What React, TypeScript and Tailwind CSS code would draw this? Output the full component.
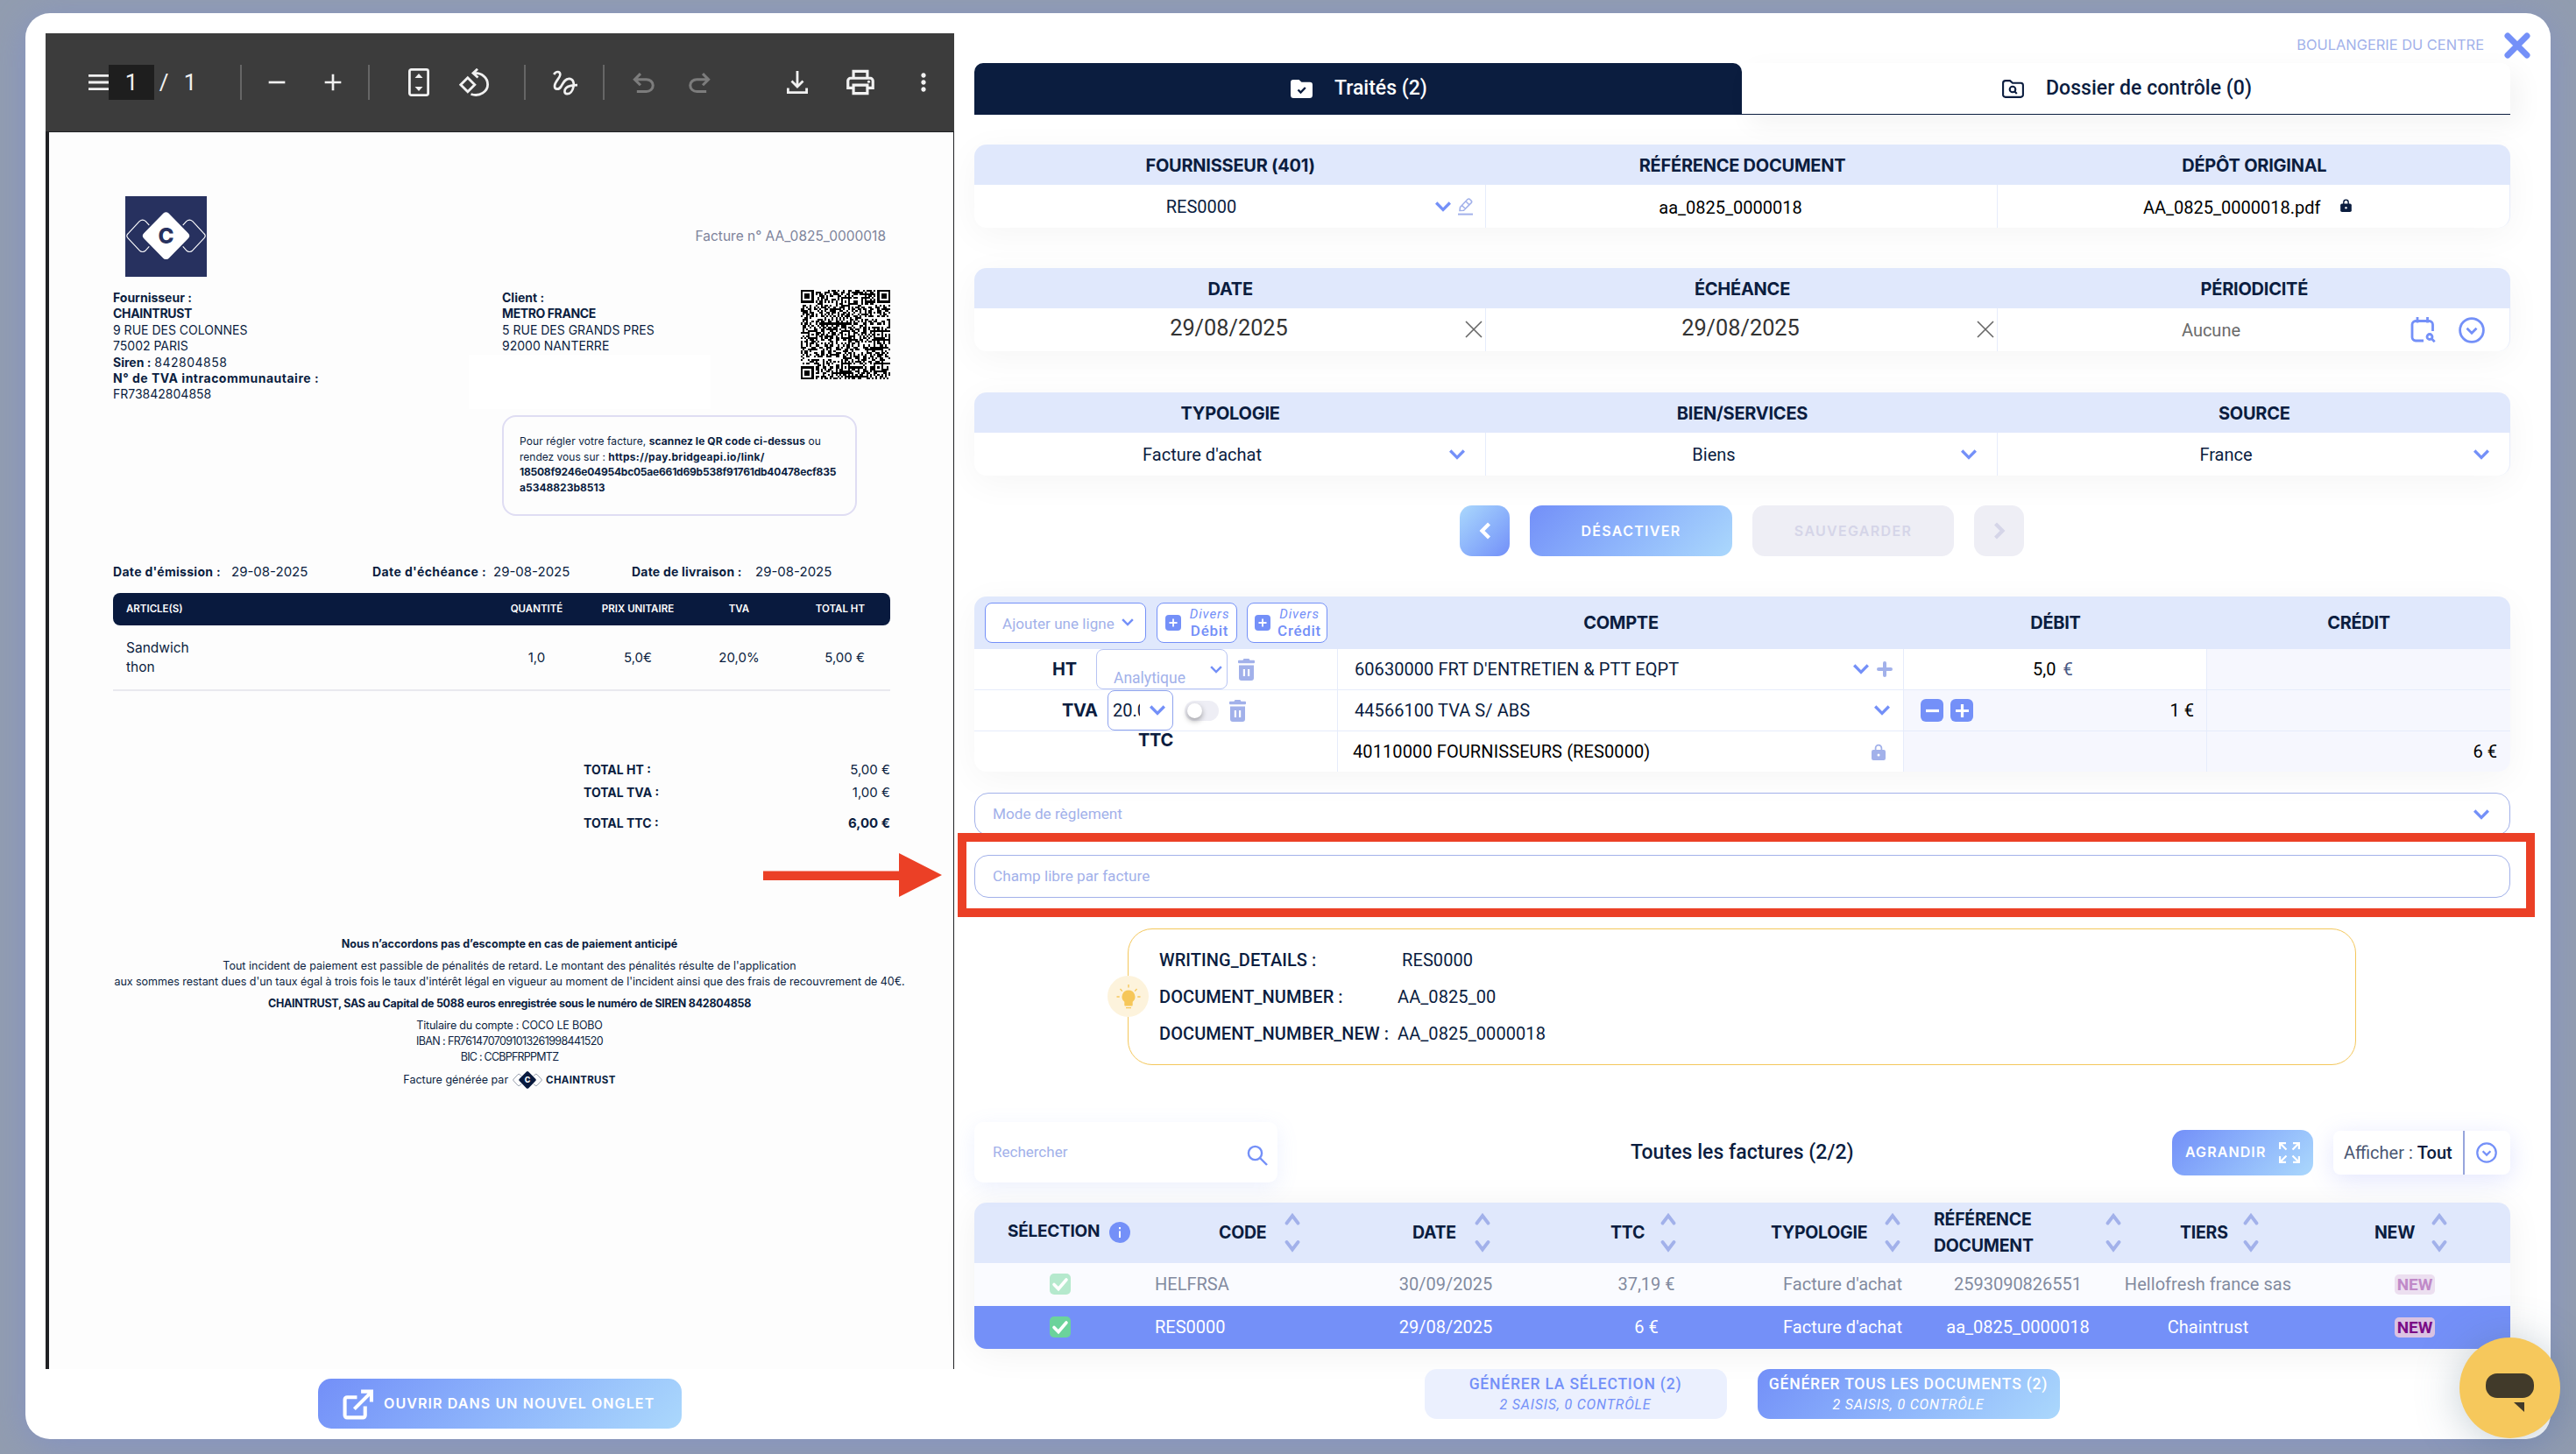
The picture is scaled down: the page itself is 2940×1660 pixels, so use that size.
import type { ReactNode } from "react";
import { MdAdd, MdMoreVert, MdOutlinePrint, MdRemove } from "react-icons/md";

const INTER = "font-[family-name:Inter,sans-serif]";

/* ---------- icons ---------- */

function Chevron({ className = "" }: { className?: string }) {
  return (
    <svg viewBox="0 0 18 12" fill="none" stroke="currentColor" strokeWidth="3.3" className={`shrink-0 ${className}`}>
      <path d="M1.2 1.5 9 9.4l7.8-7.9" />
    </svg>
  );
}

function Lock({ className = "" }: { className?: string }) {
  return (
    <svg viewBox="0 0 16 19" className={`shrink-0 ${className}`}>
      <path d="M4.6 8V5a3.4 3.4 0 0 1 6.8 0v3" fill="none" stroke="currentColor" strokeWidth="1.8" />
      <rect x="0" y="7" width="16" height="12" rx="2.2" fill="currentColor" />
      <circle cx="8" cy="13" r="1.5" fill="#fff" />
    </svg>
  );
}

function Trash() {
  return (
    <svg viewBox="0 0 19 25" className="w-[19px] h-[25px] shrink-0 text-[#a2b1ea]" fill="currentColor">
      <path d="M6.5 0h6l1 1.8H18a1 1 0 0 1 1 1v1.4a1 1 0 0 1-1 1H1a1 1 0 0 1-1-1V2.8a1 1 0 0 1 1-1h4.5z" />
      <path fillRule="evenodd" d="M1 7.5h17V22a3 3 0 0 1-3 3H4a3 3 0 0 1-3-3zM5.8 12v8H8v-8zM11 12v8h2.2v-8z" />
    </svg>
  );
}

function CircleChevron({ className = "" }: { className?: string }) {
  return (
    <svg
      viewBox="0 0 30 30"
      fill="none"
      stroke="currentColor"
      strokeWidth="2.8"
      className={`shrink-0 text-[#7490f8] ${className}`}
    >
      <circle cx="15" cy="15" r="13.4" />
      <path d="m9.500 12.800 5.500 5.400 5.500-5.400" />
    </svg>
  );
}

function PlusSquare() {
  return (
    <svg viewBox="0 0 18 18" className="w-[18px] h-[18px] shrink-0">
      <rect width="18" height="18" rx="4" fill="#7490f8" />
      <path d="M9 4.500v9M4.500 9h9" stroke="#fff" strokeWidth="1.8" />
    </svg>
  );
}

function FolderCheck() {
  return (
    <svg viewBox="0 0 25 21" className="w-[25px] h-[21px]">
      <path
        d="M3 0h6.500l3 2.700H22a3 3 0 0 1 3 3V17.500A3.500 3.500 0 0 1 21.500 21h-18A3.500 3.500 0 0 1 0 17.500V3a3 3 0 0 1 3-3z"
        fill="#fff"
      />
      <path d="m8.500 11.500 3 3 5.300-5.500" fill="none" stroke="#0b1d3f" strokeWidth="2.4" />
    </svg>
  );
}

function FolderSearch() {
  return (
    <svg viewBox="0 0 25 21" className="w-[25px] h-[21px]" fill="none" stroke="#0b1d3f" strokeWidth="2.1">
      <path d="M4 1.100h5l3 2.700h9.500a2.500 2.500 0 0 1 2.400 2.500v10.900a2.700 2.700 0 0 1-2.700 2.700H3.800a2.700 2.700 0 0 1-2.700-2.700V4A2.900 2.900 0 0 1 4 1.100z" />
      <circle cx="12" cy="11" r="3.3" />
      <path d="m14 13 2.800 3" />
    </svg>
  );
}

function UndoIcon({ className = "" }: { className?: string }) {
  return (
    <svg viewBox="160 -800 640 600" className={`w-[25px] h-[23px] shrink-0 text-[#7c7c7c] ${className}`} fill="currentColor">
      <path d="M280-200v-80h284q63 0 109.500-40T720-420q0-60-46.500-100T564-560H312l104 104-56 56-200-200 200-200 56 56-104 104h252q97 0 166.500 63T800-420q0 94-69.500 157T564-200H280Z" />
    </svg>
  );
}

function Logo({ dark = false }: { dark?: boolean }) {
  const fg = dark ? "#091a3e" : "#fff";
  const inner = dark ? "#fff" : "#27315f";
  return (
    <svg viewBox="0 0 92 54" className="w-full">
      <g fill="none" stroke={fg} strokeWidth="1.1">
        <path d="M27 15l-4-4.500q-3.500-3-7 0L3 24.500q-2.500 2.500 0 5L16 43.500q3.500 3 7 0l4-4.500" />
        <path d="M65 15l4-4.500q3.500-3 7 0l13 14q2.500 2.500 0 5L76 43.500q-3.500 3-7 0L65 39" />
      </g>
      <path d="M43 1.500q3-2.500 6 0l22 22.500q3 3 0 6L49 52.500q-3 2.500-6 0L21 30q-3-3 0-6z" fill={fg} />
      <text x="46" y="35.500" textAnchor="middle" fontFamily="Inter, sans-serif" fontWeight="800" fontSize="24" fill={inner}>
        C
      </text>
    </svg>
  );
}

// Version 8 grid: three finders, alignment squares, the rest from a seeded generator.
function QrCode() {
  const n = 49;
  let seed = 842804858;
  let d = "";
  const ring = (x: number, y: number, cx: number, cy: number) => Math.max(Math.abs(x - cx), Math.abs(y - cy));
  const finders = [[3, 3], [n - 4, 3], [3, n - 4]];
  const aligns = [[24, 6], [6, 24], [24, 24], [42, 24], [24, 42], [42, 42]];
  for (let y = 0; y < n; y++) {
    for (let x = 0; x < n; x++) {
      seed = (seed * 1103515245 + 12345) % 2147483648;
      let on = (seed >> 12) % 2 === 0;
      const f = finders.find(([cx, cy]) => ring(x, y, cx, cy) <= 4);
      const a = aligns.find(([cx, cy]) => ring(x, y, cx, cy) <= 2);
      if (f) on = [0, 1, 3].includes(ring(x, y, f[0], f[1]));
      else if (a) on = ring(x, y, a[0], a[1]) !== 1;
      if (on) d += `M${x} ${y}h1v1h-1z`;
    }
  }
  return (
    <svg viewBox={`0 0 ${n} ${n}`} preserveAspectRatio="none" className="w-[102px] h-[102px]" shapeRendering="crispEdges">
      <path d={d} fill="#000" />
    </svg>
  );
}

/* ---------- left: pdf viewer ---------- */

function Divider({ className }: { className: string }) {
  return <span className={`w-[2px] h-10 shrink-0 bg-[#666] ${className}`} />;
}

function PdfToolbar() {
  return (
    <div className="flex items-center h-[113px] bg-[#3c3c3c] border-b border-[#202124] text-[#f1f1f1] text-[26px] pl-[49px]">
      <svg viewBox="0 0 23 18" className="w-[23px] h-[18px] shrink-0" fill="currentColor">
        <path d="M0 0h23v2.800H0zM0 7.600h23v2.800H0zM0 15.200h23V18H0z" />
      </svg>
      <span className="w-[52px] h-10 bg-[#1e1e1e] flex items-center justify-center shrink-0 pt-[2px]">1</span>
      <span className="w-[22px] text-center shrink-0 pt-[2px]">/</span>
      <span className="w-[38px] text-center shrink-0 pt-[2px]">1</span>
      <Divider className="ml-[38px]" />
      <MdRemove className="w-8 h-8 shrink-0 ml-[24px]" />
      <MdAdd className="w-8 h-8 shrink-0 ml-[32px]" />
      <Divider className="ml-[24px]" />
      <svg viewBox="0 0 24 32" className="w-6 h-8 shrink-0 ml-[44px]">
        <rect x="1.400" y="1.400" width="21.200" height="29.200" rx="2" fill="none" stroke="currentColor" strokeWidth="2.8" />
        <path d="m12 6 4.500 5h-9zM12 26l4.500-5h-9z" fill="currentColor" />
      </svg>
      <svg viewBox="0 0 34 33" className="w-[34px] h-[33px] shrink-0 ml-[34px]" fill="none" stroke="currentColor" strokeWidth="2.8">
        <path d="M9.800 10.800 17.800 18.800 9.800 26.800 1.800 18.800zM16 5.500C26 4.500 32.600 11 32.600 18.500S24 33 13.500 29.500M21 .8l-5 4.700 5.500 5" />
      </svg>
      <Divider className="ml-[40px]" />
      <svg
        viewBox="0 0 28 29"
        className="w-[28px] h-[29px] shrink-0 ml-[31px]"
        fill="none"
        stroke="currentColor"
        strokeWidth="2.7"
      >
        <path d="M1.200 5C3.500 1 8.500.800 8.300 5.500 8 9 2 13.500 2 18.500c0 4 5 4.500 7.500 0S14 9.800 18.500 9.800c4.500 0 6 4.500 5 9.200-1 5-4 8.500-7.500 8.200-3-.2-3.500-4-1-6.700 2.500-2.500 7-3.300 13-3.300" />
      </svg>
      <Divider className="ml-[29px]" />
      <UndoIcon className="ml-[32px]" />
      <UndoIcon className="ml-[39px] -scale-x-100" />
      <svg viewBox="0 0 24 26" className="w-6 h-[26px] shrink-0 ml-[87px]" fill="none" stroke="currentColor" strokeWidth="2.8">
        <path d="M12 0v17.500M5.500 11.500l6.500 6.500 6.500-6.500M1.400 19.500v5.100h21.200v-5.100" />
      </svg>
      <MdOutlinePrint className="w-[38px] h-[38px] shrink-0 ml-[41px]" />
      <MdMoreVert className="w-8 h-8 shrink-0 ml-[37px]" />
    </div>
  );
}

function Invoice() {
  return (
    <div
      className={`h-[1412px] w-[1037px] bg-[#fdfdfd] border-l-4 border-r border-[#202124] pl-[73px] pt-[73px] text-[#0b1d3f] text-[14px] whitespace-nowrap ${INTER}`}
    >
      <div className="w-[887px]">
        <div className="flex items-center justify-between pl-[14px] pr-[5px]">
          <div className="w-[93px] h-[92px] bg-[#27315f] flex items-center pb-[2px]">
            <Logo />
          </div>
          <span className="text-[15.5px] text-[#7d849b]">Facture n° AA_0825_0000018</span>
        </div>

        <div className="flex h-[143px] mt-[15px] leading-[18.4px]">
          <div className="w-[444px]">
            <p className="font-bold">Fournisseur :</p>
            <p className="font-bold tracking-[-0.3px]">CHAINTRUST</p>
            <p>9 RUE DES COLONNES</p>
            <p>75002 PARIS</p>
            <p>
              <b className="font-bold">Siren :</b> <span className="tracking-[0.5px]">842804858</span>
            </p>
            <p className="font-bold tracking-[0.5px]">N° de TVA intracommunautaire :</p>
            <p>FR73842804858</p>
          </div>
          <div className="w-[341px]">
            <p className="font-bold">Client :</p>
            <p className="font-bold tracking-[-0.4px]">METRO FRANCE</p>
            <p>5 RUE DES GRANDS PRES</p>
            <p>92000 NANTERRE</p>
            <div className="w-[276px] h-[62px] -ml-[38px] bg-white" />
          </div>
          <QrCode />
        </div>

        <div className="ml-[444px] w-[405px] h-[115px] rounded-2xl border-2 border-[#dfddf3] pl-[18px] pt-[19px] text-[12px] leading-[17.6px]">
          <p className="tracking-[0.08px]">
            Pour régler votre facture, <b className="font-bold">scannez le QR code ci-dessus</b> ou
          </p>
          <p>
            rendez vous sur : <b className="font-bold tracking-[0.3px]">https://pay.bridgeapi.io/link/</b>
          </p>
          <p className="font-bold tracking-[-0.22px]">18508f9246e04954bc05ae661d69b538f91761db40478ecf835</p>
          <p className="font-bold">a5348823b8513</p>
        </div>

        <div className="flex mt-[54px] h-5 items-center">
          <b className="font-bold w-[135px] tracking-[0.3px]">Date d'émission :</b>
          <span className="w-[161px] text-[15px]">29-08-2025</span>
          <b className="font-bold w-[138px] tracking-[0.4px]">Date d'échéance :</b>
          <span className="w-[158px] text-[15px]">29-08-2025</span>
          <b className="font-bold w-[141px] tracking-[0.2px]">Date de livraison :</b>
          <span className="text-[15px]">29-08-2025</span>
        </div>

        <div className="mt-[14px] h-[37px] rounded-lg bg-[#091a3e] text-white text-[11.5px] font-semibold grid grid-cols-[426px_115px_116px_115px_115px] items-center pt-px">
          <span className="pl-[15px]">ARTICLE(S)</span>
          <span className="text-center">QUANTITÉ</span>
          <span className="text-center">PRIX UNITAIRE</span>
          <span className="text-center">TVA</span>
          <span className="text-right pr-[29px]">TOTAL HT</span>
        </div>
        <div className="h-[75px] border-b-2 border-[#e9e9ef] text-[15px] grid grid-cols-[426px_115px_116px_115px_115px] items-center">
          <span className="pl-[15px] leading-[22px] text-[15.5px]">
            Sandwich
            <br />
            thon
          </span>
          <span className="text-center">1,0</span>
          <span className="text-center">5,0€</span>
          <span className="text-center">20,0%</span>
          <span className="text-right pr-[29px]">5,00 €</span>
        </div>

        <div className="ml-[537px] mt-[77px] text-[14px]">
          <div className="flex h-[26px] items-center justify-between">
            <b className="font-bold">TOTAL HT :</b>
            <span className="text-[15px]">5,00 €</span>
          </div>
          <div className="flex h-[26px] items-center justify-between">
            <b className="font-bold">TOTAL TVA :</b>
            <span className="text-[15px]">1,00 €</span>
          </div>
          <div className="flex h-[26px] items-center justify-between mt-[9px]">
            <b className="font-bold">TOTAL TTC :</b>
            <b className="font-bold text-[15px]">6,00 €</b>
          </div>
        </div>
      </div>

      <div className="w-[905px] mt-[116px] text-center text-[12.5px] leading-[18px]">
        <p className="font-bold">Nous n’accordons pas d’escompte en cas de paiement anticipé</p>
        <p className="mt-[7px] tracking-[0.02px]">
          Tout incident de paiement est passible de pénalités de retard. Le montant des pénalités résulte de l'application
        </p>
        <p className="tracking-[-0.03px]">
          aux sommes restant dues d'un taux égal à trois fois le taux d'intérêt légal en vigueur au moment de l'incident
          ainsi que des frais de recouvrement de 40€.
        </p>
        <p className="mt-[7px] font-bold tracking-[-0.27px]">
          CHAINTRUST, SAS au Capital de 5088 euros enregistrée sous le numéro de SIREN 842804858
        </p>
        <p className="mt-[7px] tracking-[-0.2px]">Titulaire du compte : COCO LE BOBO</p>
        <p className="tracking-[-0.62px]">IBAN : FR7614707091013261998441520</p>
        <p className="tracking-[-0.75px]">BIC : CCBPFRPPMTZ</p>
        <div className="mt-[8px] flex items-center justify-center h-[18px]">
          <span>Facture générée par</span>
          <span className="w-[34px] ml-[5px] mr-[4px]">
            <Logo dark />
          </span>
          <b className="text-[11.5px] font-bold tracking-[0.3px]">CHAINTRUST</b>
        </div>
      </div>
    </div>
  );
}

function PdfPanel() {
  return (
    <section className="w-[1037px] pt-[23px] flex flex-col items-center">
      <div className="w-full">
        <PdfToolbar />
        <Invoice />
      </div>
      <button
        className={`mt-[11px] w-[415px] h-[57px] rounded-[15px] bg-linear-135 from-[#738ff8] to-[#abd8fc] text-white text-[16px] font-semibold tracking-[1.1px] flex items-center pl-[28px] pt-px gap-[12px] whitespace-nowrap ${INTER}`}
      >
        <svg viewBox="0 0 34 34" className="w-[35px] h-[35px] shrink-0" fill="none" stroke="currentColor" strokeWidth="4">
          <path d="M16 9H5a2.500 2.500 0 0 0-2.500 2.500V29A2.500 2.500 0 0 0 5 31.500h17.500A2.500 2.500 0 0 0 25 29V19" />
          <path d="M13 22 31 4M20.500 2.500H32V14" />
        </svg>
        OUVRIR DANS UN NOUVEL ONGLET
      </button>
    </section>
  );
}

/* ---------- right: entry form ---------- */

function Tabs() {
  return (
    <div className="flex h-[59px] text-[23px] font-medium">
      <div className="w-[876px] rounded-t-[10px] bg-[#0b1d3f] text-white flex items-center pl-[361px] gap-[25px] pb-px">
        <FolderCheck />
        Traités (2)
      </div>
      <div className="w-[877px] rounded-tr-[10px] border-b border-[#0b1d3f] flex items-center pl-[297px] gap-[25px] shadow-[10px_10px_30px_rgba(0,0,0,0.05)]">
        <FolderSearch />
        <span className="tracking-[0.04px]">Dossier de contrôle (0)</span>
      </div>
    </div>
  );
}

function FieldCard({ heads, className, children }: { heads: string[]; className: string; children: ReactNode }) {
  return (
    <div className={`h-[95px] rounded-[14px] bg-white shadow-[0_8px_40px_rgba(0,0,0,0.045)] ${className}`}>
      <div
        className={`grid grid-cols-3 h-[46px] rounded-t-[14px] bg-[#e0e8fc] items-center text-center text-[20px] font-bold tracking-[-0.25px] pt-px ${INTER}`}
      >
        {heads.map((h) => (
          <span key={h}>{h}</span>
        ))}
      </div>
      <div className="grid grid-cols-3 h-[49px] divide-x divide-[#e6ecfb] border-r border-[#e6ecfb] rounded-b-[14px]">
        {children}
      </div>
    </div>
  );
}

function SelectCell({ value }: { value: string }) {
  return (
    <div className="flex items-center pr-[23px]">
      <span className="flex-1 text-center pr-[22px]">{value}</span>
      <Chevron className="w-[18px] h-[12px] text-[#7490f8]" />
    </div>
  );
}

function DateCell({ value }: { value: string }) {
  return (
    <div className="flex items-center pr-[3px] pb-[2px]">
      <span className="flex-1 text-center pl-[21px] text-[25.3px] text-[#333]">{value}</span>
      <svg viewBox="0 0 20 20" className="w-5 h-5" stroke="#666" strokeWidth="1.6">
        <path d="m1 1 18 18M19 1 1 19" />
      </svg>
    </div>
  );
}

function Fields() {
  return (
    <>
      <FieldCard className="mt-[34px]" heads={["FOURNISSEUR (401)", "RÉFÉRENCE DOCUMENT", "DÉPÔT ORIGINAL"]}>
        <div className="flex items-center pr-[14px]">
          <span className="flex-1 text-center pr-[8px]">RES0000</span>
          <Chevron className="w-[18px] h-[12px] text-[#7490f8]" />
          <svg viewBox="0 0 17 20" className="w-[17px] h-5 ml-[8px]" fill="none" stroke="#a2b1ea" strokeWidth="1.6">
            <path d="M2 14.500 2.500 10.500 11 1.500q1.200-1 2.500 0l1.600 1.600q1.200 1.200 0 2.500L6.500 14.200zM8.800 3.800l4 4M4.500 8.500l4 4" />
            <path d="M0 18.600h17" strokeWidth="2" />
          </svg>
        </div>
        <div className="flex items-center justify-center pr-[25px] pt-[2px] text-black">aa_0825_0000018</div>
        <div className="flex items-center pl-[166px] pt-[2px] text-black">
          AA_0825_0000018.pdf
          <Lock className="w-[13px] h-[15px] ml-[22px] mb-[5px] text-[#0b1d3f]" />
        </div>
      </FieldCard>

      <FieldCard className="mt-[46px]" heads={["DATE", "ÉCHÉANCE", "PÉRIODICITÉ"]}>
        <DateCell value="29/08/2025" />
        <DateCell value="29/08/2025" />
        <div className="flex items-center pr-[28px] text-[#6b6b6b]">
          <span className="flex-1 text-center pr-[12px] pl-[28px]">Aucune</span>
          <svg viewBox="0 0 29 29" className="w-[29px] h-[29px] mr-[26px]" fill="none" stroke="#7490f8" strokeWidth="2.8">
            <path d="M15 27H6a4 4 0 0 1-4-4V8.500a4 4 0 0 1 4-4h15.500a4 4 0 0 1 4 4V16M8 0v6.500M19.500 0v6.500" />
            <circle cx="22" cy="22.500" r="3" />
            <path d="m24.300 24.800 3.400 3.400" />
          </svg>
          <CircleChevron className="w-[30px] h-[30px]" />
        </div>
      </FieldCard>

      <FieldCard className="mt-[47px]" heads={["TYPOLOGIE", "BIEN/SERVICES", "SOURCE"]}>
        <SelectCell value="Facture d'achat" />
        <SelectCell value="Biens" />
        <SelectCell value="France" />
      </FieldCard>
    </>
  );
}

function Actions() {
  return (
    <div
      className={`mt-[34px] h-[58px] flex justify-center gap-[23px] pr-px text-[16px] font-semibold tracking-[1.3px] ${INTER}`}
    >
      <button className="w-[57px] rounded-[14px] bg-linear-135 from-[#abd8fc] to-[#738ff8] text-white flex items-center justify-center">
        <svg viewBox="0 0 14 20" className="w-[14px] h-5" fill="none" stroke="currentColor" strokeWidth="4.2">
          <path d="m11.500 2-8 8 8 8" />
        </svg>
      </button>
      <button className="w-[231px] rounded-[14px] bg-linear-135 from-[#738ff8] to-[#abd8fc] text-white pt-px">DÉSACTIVER</button>
      <button className="w-[230px] rounded-[14px] bg-[#eeeef5] text-[#d5d5e8] pt-px">SAUVEGARDER</button>
      <button className="w-[57px] rounded-[14px] bg-[#eeeef5] text-[#d5d5e8] flex items-center justify-center">
        <svg viewBox="0 0 14 20" className="w-[14px] h-5" fill="none" stroke="currentColor" strokeWidth="4.2">
          <path d="m2.500 2 8 8-8 8" />
        </svg>
      </button>
    </div>
  );
}

function MiscButton({ label, className }: { label: string; className: string }) {
  return (
    <button
      className={`h-[46px] w-[92px] rounded-[8px] border-[1.5px] border-[#7490f8] bg-white text-[#7490f8] flex items-center ${className}`}
    >
      <PlusSquare />
      <span className="flex-1 text-center leading-[19px] pl-[2px]">
        <i className="block text-[15px] tracking-[0.9px]">Divers</i>
        <b className="block text-[17px] font-medium tracking-[0.7px]">{label}</b>
      </span>
    </button>
  );
}

function Entries() {
  const grid = "grid grid-cols-[415px_646px_346px_346px]";
  const strong = `text-[20px] font-bold tracking-[-0.3px] ${INTER}`;
  return (
    <div className="mt-[46px] h-[200px] rounded-[14px] bg-white shadow-[0_8px_40px_rgba(0,0,0,0.045)]">
      <div className={`${grid} h-[60px] rounded-t-[14px] bg-[#e0e8fc] items-center text-center`}>
        <div className="flex pl-[12px]">
          <div className="w-[184px] h-[46px] rounded-[8px] border-[1.5px] border-[#7490f8] bg-white flex items-center pl-[19px] text-[17px] text-[#a2b1ea] pt-[2px]">
            <span className="w-[136px] text-left tracking-[0.05px]">Ajouter une ligne</span>
            <Chevron className="w-[14px] h-[9px] text-[#7490f8] mb-[4px]" />
          </div>
          <MiscButton label="Débit" className="ml-[12px] pl-[9px]" />
          <MiscButton label="Crédit" className="ml-[11px] pl-[8px]" />
        </div>
        <span className={strong}>COMPTE</span>
        <span className={strong}>DÉBIT</span>
        <span className={strong}>CRÉDIT</span>
      </div>

      <div className={`${grid} h-[47px] divide-x divide-[#e6ecfb] border-b border-[#e6ecfb]`}>
        <div className="flex items-center pl-[89px]">
          <span className={`w-[50px] ${strong}`}>HT</span>
          <div className="w-[150px] h-[46px] rounded-[8px] border border-[#b7c4f3] flex pl-[19px] pt-[21px] text-[17.5px] leading-[22px] text-[#a2b1ea]">
            <span className="w-[110px]">Analytique</span>
            <Chevron className="w-[14px] h-[9px] text-[#7490f8] -mt-[3px]" />
          </div>
          <span className="ml-[12px]">
            <Trash />
          </span>
        </div>
        <div className="flex items-center pl-[19px] pr-[12px]">
          <span className="flex-1 tracking-[0.06px]">60630000 FRT D'ENTRETIEN &amp; PTT EQPT</span>
          <Chevron className="w-[18px] h-[12px] text-[#7490f8]" />
          <svg viewBox="0 0 18 18" className="w-[18px] h-[18px] ml-[9px]" stroke="#a2b1ea" strokeWidth="4" strokeLinecap="round">
            <path d="M9 2v14M2 9h14" />
          </svg>
        </div>
        <div className="flex items-center pl-[147px] text-black">
          5,0<span className="text-[#4a5b85] ml-[8px]">€</span>
        </div>
        <div className="bg-[#f6f7fe]" />
      </div>

      <div className={`${grid} h-[47px] divide-x divide-[#e6ecfb] border-b border-[#e6ecfb]`}>
        <div className="flex items-center pl-[100px]">
          <span className={`w-[52px] ${strong}`}>TVA</span>
          <div className="w-[75px] h-[46px] rounded-[8px] border border-[#8fa3ee] flex items-center pl-[5px]">
            <span className="w-[31px] overflow-hidden mr-[11px] whitespace-nowrap">20.00</span>
            <Chevron className="w-[18px] h-[12px] text-[#7490f8]" />
          </div>
          <div className="ml-[13px] w-[39px] h-[23px] rounded-full bg-[#eeeef5] p-[3px]">
            <div className="w-[17px] h-[17px] rounded-full bg-white shadow-[0_3px_6px_rgba(0,0,0,0.35)]" />
          </div>
          <span className="ml-[12px]">
            <Trash />
          </span>
        </div>
        <div className="flex items-center pl-[19px] pr-[15px]">
          <span className="flex-1 tracking-[0.06px]">44566100 TVA S/ ABS</span>
          <Chevron className="w-[18px] h-[12px] text-[#7490f8]" />
        </div>
        <div className="flex items-center bg-[#f6f7fe] pl-[19px] pr-[14px] gap-[8px] text-black">
          <span className="w-[26px] h-[26px] rounded-[6px] bg-[#7490f8] flex items-center justify-center">
            <svg viewBox="0 0 14 14" className="w-[15px] h-[15px]" stroke="#fff" strokeWidth="3">
              <path d="M0 7h14" />
            </svg>
          </span>
          <span className="w-[26px] h-[26px] rounded-[6px] bg-[#7490f8] flex items-center justify-center">
            <svg viewBox="0 0 14 14" className="w-[15px] h-[15px]" stroke="#fff" strokeWidth="3">
              <path d="M0 7h14M7 0v14" />
            </svg>
          </span>
          <span className="flex-1 text-right">1 €</span>
        </div>
        <div className="bg-[#f6f7fe]" />
      </div>

      <div className={`${grid} h-[46px] divide-x divide-[#e6ecfb] text-black`}>
        <div className={`text-center text-[#0b1d3f] leading-[21px] ${strong}`}>TTC</div>
        <div className="flex items-center pl-[17px] pr-[20px]">
          <span className="flex-1 tracking-[0.1px]">40110000 FOURNISSEURS (RES0000)</span>
          <Lock className="w-4 h-[19px] text-[#a2b1ea]" />
        </div>
        <div className="bg-[#f6f7fe]" />
        <div className="bg-[#f6f7fe] rounded-br-[14px] flex items-center justify-end pr-[15px]">6 €</div>
      </div>
    </div>
  );
}

function Hints() {
  const rows = [
    ["WRITING_DETAILS :", "\u00a0RES0000"],
    ["DOCUMENT_NUMBER :", "AA_0825_00"],
    ["DOCUMENT_NUMBER_NEW :", "AA_0825_0000018"],
  ];
  return (
    <div className="relative mt-[35px] ml-[175px] w-[1402px] h-[156px] rounded-[28px] border-[1.5px] border-[#f4c75b] pl-[35px] pt-[14px]">
      {rows.map(([label, value]) => (
        <div key={label} className="flex h-[42px] items-center tracking-[0.08px]">
          <b className="w-[272px] font-medium whitespace-nowrap">{label}</b>
          <span>{value}</span>
        </div>
      ))}
      <span className="absolute -left-[24px] top-[53px] w-[47px] h-[47px] rounded-full bg-[#fdf3dc] flex items-center justify-center">
        <svg viewBox="0 0 30 30" className="w-[30px] h-[30px]" fill="#f6c75a">
          <path d="M15 7.500a7.500 7.500 0 0 0-4.700 13.300v3.700q0 1 1 1h7.400q1 0 1-1v-3.700A7.500 7.500 0 0 0 15 7.500zM12 27h6v1.300h-6z" />
          <path
            d="M15 1v3.500M5.500 6l2.300 2.600M24.500 6l-2.300 2.600M1.500 15h3.200M25.300 15h3.200"
            stroke="#f6c75a"
            strokeWidth="1.4"
          />
        </svg>
      </span>
    </div>
  );
}

/* ---------- right: invoices list ---------- */

function SortArrows() {
  return (
    <svg
      viewBox="0 0 18 46"
      className="w-[18px] h-[46px] shrink-0"
      fill="none"
      stroke="#a2b1ea"
      strokeWidth="3.8"
      strokeLinecap="round"
    >
      <path d="m2.500 12.500 6.500-8.500 6.500 8.500M2.500 34l6.500 8.500 6.500-8.500" />
    </svg>
  );
}

const HEADS = [
  { label: "CODE", cell: "w-[252px] pl-[84px]", text: "w-[75px]" },
  { label: "DATE", cell: "w-[182px] pl-[53px]", text: "w-[71px]" },
  { label: "TTC", cell: "w-[276px] pl-[97px]", text: "w-[57px]" },
  { label: "TYPOLOGIE", cell: "w-[172px] pl-[4px]", text: "w-[130px]" },
  { label: "RÉFÉRENCE DOCUMENT", cell: "w-[228px] pl-[18px]", text: "w-[196px] pr-[60px]" },
  { label: "TIERS", cell: "w-[206px] pl-[71px]", text: "w-[72px]" },
  { label: "NEW", cell: "w-[242px] pl-[87px]", text: "w-[65px]" },
];

const ROWS = [
  {
    code: "HELFRSA",
    date: "30/09/2025",
    ttc: "37,19 €",
    type: "Facture d'achat",
    ref: "2593090826551",
    tiers: "Hellofresh france sas",
    active: false,
  },
  {
    code: "RES0000",
    date: "29/08/2025",
    ttc: "6 €",
    type: "Facture d'achat",
    ref: "aa_0825_0000018",
    tiers: "Chaintrust",
    active: true,
  },
];

function InvoiceList() {
  return (
    <>
      <div className="mt-[65px] h-[69px] flex items-center">
        <div className="w-[346px] h-[69px] rounded-[10px] bg-white shadow-[0_6px_24px_rgba(116,144,248,0.13)] flex items-center justify-between pl-[21px] pr-[11px] text-[17px] text-[#a2b1ea]">
          Rechercher
          <svg viewBox="0 0 24 24" className="w-6 h-6 mt-[6px]" fill="none" stroke="#7490f8" strokeWidth="2.4">
            <circle cx="9.500" cy="9.500" r="7.600" />
            <path d="m15 15 8 8" />
          </svg>
        </div>
        <div className="ml-[403px] w-[618px] text-[23px] font-medium tracking-[0.05px]">Toutes les factures (2/2)</div>
        <button
          className={`w-[161px] h-[52px] rounded-[14px] bg-linear-135 from-[#738ff8] to-[#abd8fc] text-white text-[16px] font-semibold tracking-[1.1px] flex items-center pl-[15px] ${INTER}`}
        >
          <span className="w-[107px] text-left">AGRANDIR</span>
          <svg viewBox="0 0 24 24" className="w-6 h-6 shrink-0" fill="none" stroke="currentColor" strokeWidth="2.2">
            <path d="M1.100 8V1.100H8M16 1.100h6.900V8M22.900 16v6.900H16M8 22.900H1.100V16M1.500 1.500l7 7M22.500 1.500l-7 7M22.500 22.500l-7-7M1.500 22.500l7-7" />
          </svg>
        </button>
        <div className="ml-[23px] w-[202px] h-[50px] rounded-[8px] bg-white shadow-[0_6px_28px_rgba(116,130,248,0.2)] flex items-center pl-[12px]">
          <span className="w-[136px] whitespace-nowrap text-[#4b5773]">
            Afficher : <b className="font-medium text-[#0b1d3f]">Tout</b>
          </span>
          <span className="w-[2px] h-full bg-[#97a5dc]" />
          <CircleChevron className="w-6 h-6 ml-[13px]" />
        </div>
      </div>

      <div className="mt-[23px] rounded-[14px] overflow-hidden shadow-[0_4px_40px_rgba(0,0,0,0.06)]">
        <div
          className={`flex items-center h-[69px] pb-px bg-[#e0e8fc] text-[19.5px] font-bold tracking-[-0.25px] leading-[30px] ${INTER}`}
        >
          <div className="w-[195px] pl-[38px] flex items-center">
            <span className="w-[116px] text-[19px] pb-[2px]">SÉLECTION</span>
            <svg viewBox="0 0 24 24" className="w-6 h-6 shrink-0">
              <circle cx="12" cy="12" r="12" fill="#7490f8" />
              <path d="M12 10.500V18M12 6v2.200" stroke="#fff" strokeWidth="2" />
            </svg>
          </div>
          {HEADS.map((h) => (
            <div key={h.label} className={`flex items-center shrink-0 ${h.cell}`}>
              <span className={`shrink-0 ${h.text}`}>{h.label}</span>
              <SortArrows />
            </div>
          ))}
        </div>
        {ROWS.map((r) => (
          <div
            key={r.code}
            className={`flex items-center h-[49px] pb-px text-center ${
              r.active ? "bg-[#7490f8] text-white" : "bg-[#fafbff] text-[#838b9f]"
            }`}
          >
            <div className="w-[195px] flex justify-center">
              <svg viewBox="0 0 24 24" className="w-6 h-6">
                <rect width="24" height="24" rx="5" fill={r.active ? "#6bd39b" : "#b5e9cd"} />
                <path d="m5 12.500 5 5L19 7" fill="none" stroke="#fff" strokeWidth="3.6" strokeLinecap="round" />
              </svg>
            </div>
            <span className="w-[252px] pl-[11px] text-left">{r.code}</span>
            <span className="w-[182px]">{r.date}</span>
            <span className="w-[276px]">{r.ttc}</span>
            <span className="w-[172px]">{r.type}</span>
            <span className="w-[228px]">{r.ref}</span>
            <span className="w-[206px] tracking-[0.05px]">{r.tiers}</span>
            <span className="w-[242px] pl-[110px] flex">
              <b
                className={`w-[46px] h-[23px] rounded-[5px] text-[19px] font-bold leading-[24px] ${
                  r.active ? "bg-[#dbc3e2] text-[#7a0c86]" : "bg-[#ecdff0] text-[#c08ac8]"
                }`}
              >
                NEW
              </b>
            </span>
          </div>
        ))}
      </div>

      <div className="mt-[23px] h-[57px] flex justify-center gap-[35px] pr-px leading-[24px]">
        <button className="w-[345px] rounded-[14px] bg-[#ebf0fe] text-[#7490f8]">
          <b className="block text-[17.5px] font-medium tracking-[0.8px]">GÉNÉRER LA SÉLECTION (2)</b>
          <i className="block text-[16px] tracking-[0.8px]">2 SAISIS, 0 CONTRÔLE</i>
        </button>
        <button className="w-[345px] rounded-[14px] bg-linear-135 from-[#738ff8] to-[#abd8fc] text-white">
          <b className="block text-[17.5px] font-medium tracking-[0.8px]">GÉNÉRER TOUS LES DOCUMENTS (2)</b>
          <i className="block text-[16px] tracking-[0.8px]">2 SAISIS, 0 CONTRÔLE</i>
        </button>
      </div>
    </>
  );
}

/* ---------- overlays ---------- */

function Annotation() {
  return (
    <>
      <svg viewBox="0 0 204 50" className="absolute left-[871px] top-[974px] w-[204px] h-[50px]" fill="#eb4026">
        <path d="M0 20.500h155V0l49 25-49 25V31H0z" />
      </svg>
      <div className="absolute left-[1093px] top-[951px] w-[1800px] h-[96px] border-[10px] border-[#eb4026]" />
    </>
  );
}

function ChatBubble() {
  return (
    <button className="absolute left-[2807px] top-[1527px] w-[115px] h-[115px] rounded-full bg-[#f6c85c] shadow-[0_4px_50px_rgba(80,110,130,0.35)]">
      <svg viewBox="0 0 115 115" fill="#413a2a">
        <rect x="30" y="41" width="55" height="28" rx="13" />
        <path d="M62 74h12v11z" />
      </svg>
    </button>
  );
}

export default function App() {
  return (
    <div className="relative w-[2940px] h-[1660px] overflow-hidden bg-[#929db0] pl-[29px] pt-[15px] font-[family-name:Roboto,sans-serif] text-[20px] leading-[1.2] text-[#0b1d3f]">
      <main className="w-[2882px] h-[1628px] rounded-[28px] bg-white flex pl-[23px] gap-[23px] shadow-[0_6px_40px_rgba(120,135,215,0.5)]">
        <PdfPanel />
        <section className="w-[1753px]">
          <div
            className={`h-[57px] pt-[17px] -mr-[23px] flex items-center justify-end gap-[23px] text-[16.4px] text-[#a2b1ea] ${INTER}`}
          >
            BOULANGERIE DU CENTRE
            <svg viewBox="0 0 30 30" className="w-[30px] h-[30px]" stroke="#7490f8" strokeWidth="7" strokeLinecap="round">
              <path d="m4 4 22 22M26 4 4 26" />
            </svg>
          </div>
          <Tabs />
          <Fields />
          <Actions />
          <Entries />
          <div className="mt-[24px] h-[49px] rounded-[16px] border-[1.5px] border-[#a2b1ea] flex items-center justify-between pl-[20px] pr-[23px] text-[17.2px] text-[#a2b1ea]">
            Mode de règlement
            <Chevron className="w-[18px] h-[12px] text-[#7490f8]" />
          </div>
          <div className="mt-[22px] h-[49px] rounded-[16px] border-[1.5px] border-[#a2b1ea] flex items-center pl-[20px] text-[17.2px] text-[#a2b1ea]">
            Champ libre par facture
          </div>
          <Hints />
          <InvoiceList />
        </section>
      </main>
      <Annotation />
      <ChatBubble />
    </div>
  );
}
